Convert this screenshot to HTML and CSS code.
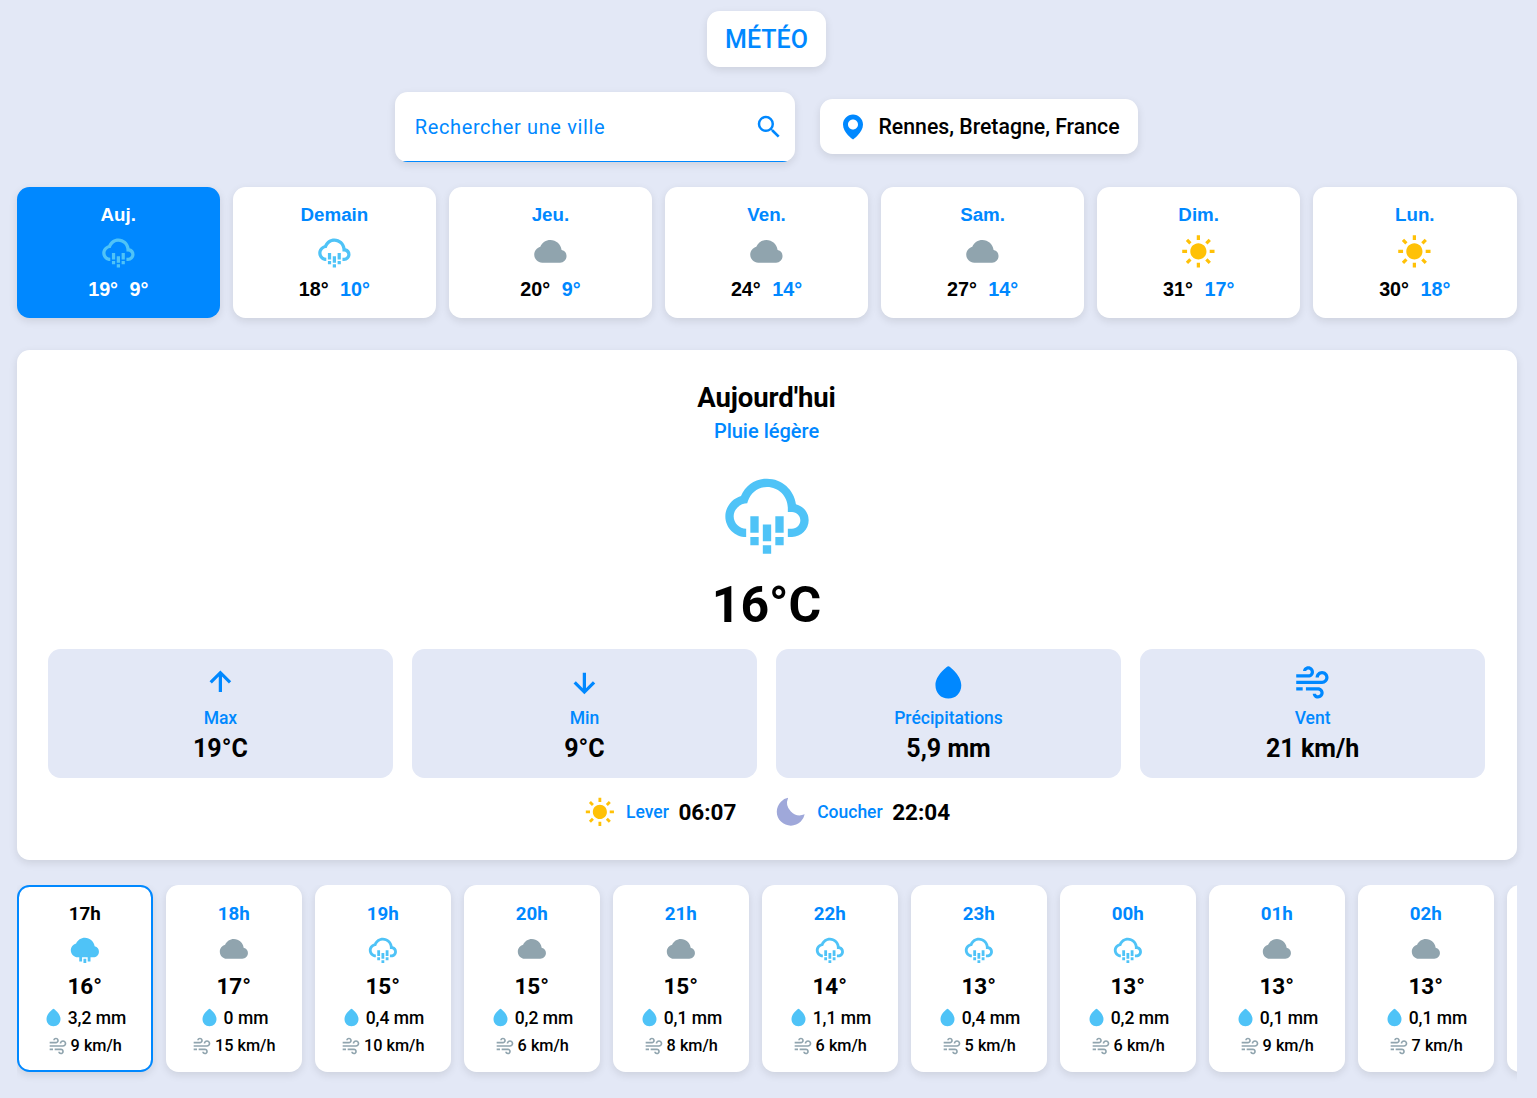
FILE: index.html
```html
<!DOCTYPE html>
<html lang="fr">
<head>
    <meta charset="UTF-8">
    <meta name="viewport" content="width=device-width, initial-scale=1.0">
    <title>Météo</title>
    <link rel="stylesheet" href="styles.css">
</head>
<body>
    <!-- Icônes -->
    <svg class="sprite" xmlns="http://www.w3.org/2000/svg">
        <symbol id="rain" viewBox="0 -1 24 24">
            <path d="M18.944 9.112C18.507 5.67 15.56 3 12 3 9.244 3 6.85 4.611 5.757 7.15 3.609 7.792 2 9.82 2 12c0 2.757 2.243 5 5 5v-2c-1.654 0-3-1.346-3-3 0-1.403 1.199-2.756 2.673-3.015l.581-.103.192-.559C8.149 6.273 9.895 5 12 5c2.757 0 5 2.243 5 5v1h1c1.103 0 2 .897 2 2s-.897 2-2 2h-1v2h1c2.206 0 4-1.794 4-4a4.008 4.008 0 0 0-3.056-3.888z"/>
            <path d="M8 12h2v4H8zm0 5h2v2H8zm3-3h2v4h-2zm0 5h2v2h-2zm3-7h2v4h-2zm0 5h2v2h-2z"/>
        </symbol>
        <symbol id="rain-solid" viewBox="0 -1 24 24">
            <path d="M18.944 9.112C18.507 5.67 15.56 3 12 3 9.244 3 6.85 4.611 5.757 7.15 3.609 7.792 2 9.82 2 12c0 2.757 2.243 5 5 5h1v3h2v-3h1v4h2v-4h1v3h2v-3h2c2.206 0 4-1.794 4-4a4.01 4.01 0 0 0-3.056-3.888zM11 17h2v1h-2z" fill-rule="evenodd"/>
        </symbol>
        <symbol id="cloud" viewBox="0 0 24 24">
            <path d="M18.944 11.112C18.507 7.67 15.56 5 12 5 9.244 5 6.85 6.611 5.757 9.15 3.609 9.792 2 11.82 2 14c0 2.757 2.243 5 5 5h11c2.206 0 4-1.794 4-4a4.01 4.01 0 0 0-3.056-3.888z"/>
        </symbol>
        <symbol id="sun" viewBox="0 0 24 24">
            <path d="M6.995 12c0 2.761 2.246 5.007 5.007 5.007s5.007-2.246 5.007-5.007-2.246-5.007-5.007-5.007S6.995 9.239 6.995 12zM11 19h2v3h-2zm0-17h2v3h-2zm-9 9h3v2H2zm17 0h3v2h-3zM5.637 19.778l-1.414-1.414 2.121-2.121 1.414 1.414zM16.242 6.344l2.122-2.122 1.414 1.414-2.122 2.122zM6.344 7.759 4.223 5.637l1.415-1.414 2.12 2.122zm13.434 10.605-1.414 1.414-2.122-2.122 1.414-1.414z"/>
        </symbol>
        <symbol id="moon" viewBox="0 0 24 24">
            <path d="M12 11.807A9.002 9.002 0 0 1 10.049 2a9.942 9.942 0 0 0-5.12 2.735c-3.905 3.905-3.905 10.237 0 14.142 3.906 3.906 10.237 3.905 14.143 0a9.946 9.946 0 0 0 2.735-5.119A9.003 9.003 0 0 1 12 11.807z"/>
        </symbol>
        <symbol id="drop" viewBox="0 0 24 24">
            <path d="M12 22c4.636 0 8-3.468 8-8.246C20 7.522 12.882 2.4 12.579 2.185a1 1 0 0 0-1.156-.001C11.12 2.397 4 7.503 4 13.75 4 18.53 7.364 22 12 22z"/>
        </symbol>
        <symbol id="wind" viewBox="0 0 24 24">
            <path d="M13 5.5C13 3.57 11.43 2 9.5 2 7.466 2 6.25 3.525 6.25 5h2c0-.415.388-1 1.25-1 .827 0 1.5.673 1.5 1.5S10.327 7 9.5 7H2v2h7.5C11.43 9 13 7.43 13 5.5zm2.5 9.5H8v2h7.5c.827 0 1.5.673 1.5 1.5s-.673 1.5-1.5 1.5c-.862 0-1.25-.585-1.25-1h-2c0 1.475 1.216 3 3.25 3 1.93 0 3.5-1.57 3.5-3.5S17.43 15 15.5 15z"/>
            <path d="M18 5c-2.206 0-4 1.794-4 4h2c0-1.103.897-2 2-2s2 .897 2 2-.897 2-2 2H2v2h16c2.206 0 4-1.794 4-4s-1.794-4-4-4zM2 15h4v2H2z"/>
        </symbol>
        <symbol id="up" viewBox="0 0 24 24">
            <path d="M11 8.414V18h2V8.414l4.293 4.293 1.414-1.414L12 4.586l-6.707 6.707 1.414 1.414z"/>
        </symbol>
        <symbol id="down" viewBox="0 0 24 24">
            <path d="m18.707 12.707-1.414-1.414L13 15.586V6h-2v9.586l-4.293-4.293-1.414 1.414L12 19.414z"/>
        </symbol>
        <symbol id="pin" viewBox="0 0 24 24">
            <path d="M12 2C7.589 2 4 5.589 4 9.995 3.971 16.44 11.696 21.784 12 22c0 0 8.029-5.56 8-12 0-4.411-3.589-8-8-8zm0 12c-2.21 0-4-1.79-4-4s1.79-4 4-4 4 1.79 4 4-1.79 4-4 4z"/>
        </symbol>
        <symbol id="search" viewBox="0 0 24 24">
            <path d="M15.5 14h-.79l-.28-.27A6.471 6.471 0 0 0 16 9.5 6.5 6.5 0 1 0 9.5 16c1.61 0 3.09-.59 4.23-1.57l.27.28v.79l5 4.99L20.49 19l-4.99-5zm-6 0C7.01 14 5 11.99 5 9.5S7.01 5 9.5 5 14 7.01 14 9.5 11.99 14 9.5 14z"/>
        </symbol>
    </svg>

    <div class="page">
        <h1 class="title">MÉTÉO</h1>

        <!-- Recherche et ville -->
        <div class="top-bar">
            <div class="search">
                <input type="text" placeholder="Rechercher une ville">
                <svg class="icon"><use href="#search"/></svg>
            </div>
            <div class="location">
                <svg class="icon"><use href="#pin"/></svg>
                <span>Rennes, Bretagne, France</span>
            </div>
        </div>

        <!-- Prévisions par jour -->
        <div class="days" id="days"></div>

        <!-- Détail du jour -->
        <div class="today">
            <h2>Aujourd'hui</h2>
            <p class="condition">Pluie légère</p>
            <svg class="icon today-icon rain"><use href="#rain"/></svg>
            <p class="current">16°C</p>

            <div class="stats">
                <div class="stat">
                    <svg class="icon"><use href="#up"/></svg>
                    <span class="label">Max</span>
                    <span class="value">19°C</span>
                </div>
                <div class="stat">
                    <svg class="icon"><use href="#down"/></svg>
                    <span class="label">Min</span>
                    <span class="value">9°C</span>
                </div>
                <div class="stat">
                    <svg class="icon"><use href="#drop"/></svg>
                    <span class="label">Précipitations</span>
                    <span class="value">5,9 mm</span>
                </div>
                <div class="stat">
                    <svg class="icon"><use href="#wind"/></svg>
                    <span class="label">Vent</span>
                    <span class="value">21 km/h</span>
                </div>
            </div>

            <div class="sun-times">
                <div class="sun-time">
                    <svg class="icon sun"><use href="#sun"/></svg>
                    <span class="label">Lever</span>
                    <span class="time">06:07</span>
                </div>
                <div class="sun-time">
                    <svg class="icon moon"><use href="#moon"/></svg>
                    <span class="label">Coucher</span>
                    <span class="time">22:04</span>
                </div>
            </div>
        </div>

        <!-- Prévisions par heure -->
        <div class="hours" id="hours"></div>
    </div>

    <script>
        const days = [
            { name: 'Auj.', icon: 'rain', max: 19, min: 9 },
            { name: 'Demain', icon: 'rain', max: 18, min: 10 },
            { name: 'Jeu.', icon: 'cloud', max: 20, min: 9 },
            { name: 'Ven.', icon: 'cloud', max: 24, min: 14 },
            { name: 'Sam.', icon: 'cloud', max: 27, min: 14 },
            { name: 'Dim.', icon: 'sun', max: 31, min: 17 },
            { name: 'Lun.', icon: 'sun', max: 30, min: 18 }
        ];

        const hours = [
            { hour: '17h', icon: 'rain-solid', temp: 16, rain: '3,2', wind: 9 },
            { hour: '18h', icon: 'cloud', temp: 17, rain: '0', wind: 15 },
            { hour: '19h', icon: 'rain', temp: 15, rain: '0,4', wind: 10 },
            { hour: '20h', icon: 'cloud', temp: 15, rain: '0,2', wind: 6 },
            { hour: '21h', icon: 'cloud', temp: 15, rain: '0,1', wind: 8 },
            { hour: '22h', icon: 'rain', temp: 14, rain: '1,1', wind: 6 },
            { hour: '23h', icon: 'rain', temp: 13, rain: '0,4', wind: 5 },
            { hour: '00h', icon: 'rain', temp: 13, rain: '0,2', wind: 6 },
            { hour: '01h', icon: 'cloud', temp: 13, rain: '0,1', wind: 9 },
            { hour: '02h', icon: 'cloud', temp: 13, rain: '0,1', wind: 7 }
        ];

        // Cartes des jours
        document.getElementById("days").innerHTML = days.map((day, index) => `
            <button class="day ${index === 0 ? 'active' : ''}">
                <span class="day-name">${day.name}</span>
                <svg class="icon ${day.icon}"><use href="#${day.icon}"/></svg>
                <span class="temps"><span>${day.max}°</span><span class="min">${day.min}°</span></span>
            </button>
        `).join("");

        // Cartes des heures, la dernière dépasse du cadre
        document.getElementById("hours").innerHTML = hours.map((h, index) => `
            <div class="hour ${index === 0 ? 'active' : ''}">
                <span class="hour-name">${h.hour}</span>
                <svg class="icon ${h.icon}"><use href="#${h.icon}"/></svg>
                <span class="hour-temp">${h.temp}°</span>
                <span class="hour-rain"><svg class="icon rain"><use href="#drop"/></svg>${h.rain} mm</span>
                <span class="hour-wind"><svg class="icon cloud"><use href="#wind"/></svg>${h.wind} km/h</span>
            </div>
        `).join("") + '<div class="hour"></div>';
    </script>
</body>
</html>
```
FILE: styles.css
```css
* {
    box-sizing: border-box;
}

body {
    margin: 0;
    background-color: #e3e8f6;
    font-family: Roboto, "Liberation Sans", sans-serif;
    color: #000;
    overflow: hidden;
}

h1, h2, p {
    margin: 0;
}

.sprite {
    display: none;
}

.icon {
    display: block;
    flex-shrink: 0;
    fill: currentColor;
}

.page {
    width: 1533px;
    padding: 11px 16.5px 0;
    display: flex;
    flex-direction: column;
    align-items: center;
}

.title {
    height: 56px;
    padding: 1px 18.5px 0;
    line-height: 56px;
    background-color: white;
    border-radius: 12.5px;
    box-shadow: 0 3px 8px rgba(0, 0, 0, 0.1);
    color: #0088ff;
    font-size: 25px;
    font-weight: 500;
}

/* Recherche */
.top-bar {
    display: flex;
    align-items: center;
    gap: 25px;
    margin-top: 25px;
}

.search {
    width: 400px;
    height: 70px;
    padding: 0 11px 0 20px;
    display: flex;
    align-items: center;
    background: linear-gradient(#0088ff, #0088ff) bottom / 100% 1px no-repeat white;
    border-radius: 12.5px;
    box-shadow: 0 3px 8px rgba(0, 0, 0, 0.1);
    color: #0088ff;
}

.search input {
    flex-grow: 1;
    padding: 0;
    border: none;
    outline: none;
    background: none;
    font-family: inherit;
    font-size: 20px;
    letter-spacing: 0.625px;
}

.search input::placeholder {
    color: #0088ff;
}

.search .icon {
    width: 30px;
    height: 30px;
}

.location {
    height: 55px;
    margin-bottom: 1px;
    padding: 0 18.75px;
    display: flex;
    align-items: center;
    gap: 10px;
    background-color: white;
    border-radius: 12.5px;
    box-shadow: 0 3px 8px rgba(0, 0, 0, 0.1);
    font-size: 21.25px;
    font-weight: 500;
}

.location .icon {
    width: 30px;
    height: 30px;
    color: #0088ff;
}

/* Jours */
.days {
    width: 100%;
    height: 148px;
    margin-top: 25px;
    display: flex;
    align-items: flex-start;
    gap: 12.5px;
}

.day {
    flex: 1;
    height: 131px;
    padding: 16px 0 0;
    display: flex;
    flex-direction: column;
    align-items: center;
    border: none;
    border-radius: 12.5px;
    background-color: white;
    box-shadow: 0 3px 8px rgba(0, 0, 0, 0.1);
    font-family: "Liberation Sans", Arial, sans-serif;
    font-size: 19.75px;
    font-weight: bold;
    line-height: 23px;
    color: #000;
    cursor: pointer;
}

.day-name {
    font-size: 18.75px;
    color: #0088ff;
}

.day .icon {
    width: 38.75px;
    height: 38.75px;
    margin: 6px 0 7px;
}

.temps {
    display: flex;
    gap: 11.5px;
}

.temps .min {
    color: #0088ff;
}

.day.active {
    background-color: #0088ff;
}

.day.active .day-name,
.day.active .temps,
.day.active .min {
    color: white;
}

.icon.rain,
.icon.rain-solid {
    color: #4fc3f7;
}

.icon.cloud {
    color: #90a4ae;
}

.icon.sun {
    color: #ffc107;
}

.icon.moon {
    color: #9fa8da;
}

/* Aujourd'hui */
.today {
    width: 100%;
    height: 510px;
    margin-top: 15px;
    padding: 31.25px;
    display: flex;
    flex-direction: column;
    align-items: center;
    background-color: white;
    border-radius: 12.5px;
    box-shadow: 0 3px 8px rgba(0, 0, 0, 0.1);
}

.today h2 {
    font-size: 27.5px;
    font-weight: 700;
    line-height: 33px;
    letter-spacing: -0.1px;
}

.condition {
    margin-top: 5px;
    font-size: 20px;
    font-weight: 500;
    line-height: 24px;
    color: #0088ff;
}

.today-icon {
    width: 100px;
    height: 100px;
    margin-top: 19px;
}

.current {
    margin-top: 12px;
    font-size: 50px;
    font-weight: 700;
    line-height: 62px;
}

.stats {
    width: 100%;
    margin-top: 13px;
    display: grid;
    grid-template-columns: repeat(4, 1fr);
    gap: 18.75px;
}

.stat {
    height: 129px;
    padding-top: 14px;
    display: flex;
    flex-direction: column;
    align-items: center;
    border-radius: 12.5px;
    background-color: #e3e8f6;
}

.stat .icon {
    width: 38.75px;
    height: 38.75px;
    color: #0088ff;
}

.label {
    font-size: 17.5px;
    font-weight: 500;
    line-height: 21px;
    color: #0088ff;
}

.stat .label {
    margin-top: 6px;
}

.value {
    margin-top: 4px;
    font-size: 25px;
    font-weight: 700;
    line-height: 31px;
}

.sun-times {
    margin-top: 17px;
    display: flex;
    gap: 37.5px;
}

.sun-time {
    display: flex;
    align-items: center;
    gap: 9.5px;
}

.sun-time .icon {
    width: 33.75px;
    height: 33.75px;
}

.time {
    font-size: 22.5px;
    font-weight: 700;
}

/* Heures */
.hours {
    width: 100%;
    height: 200px;
    margin-top: 25px;
    display: flex;
    align-items: flex-start;
    gap: 12.5px;
    overflow: hidden;
}

.hour {
    flex: 0 0 136.5px;
    height: 187px;
    padding-top: 18px;
    display: flex;
    flex-direction: column;
    align-items: center;
    border-radius: 12.5px;
    background-color: white;
    box-shadow: 0 3px 8px rgba(0, 0, 0, 0.1);
}

.hour.active {
    padding-top: 16px;
    border: 2px solid #0088ff;
}

.hour-name {
    font-size: 18.75px;
    font-weight: 700;
    line-height: 23px;
    color: #0088ff;
}

.hour.active .hour-name {
    color: #000;
}

.hour > .icon {
    width: 33.75px;
    height: 33.75px;
    margin: 6px 0;
}

.hour-temp {
    font-size: 22.5px;
    font-weight: 700;
    line-height: 28px;
}

.hour-rain,
.hour-wind {
    display: flex;
    align-items: center;
}

.hour-rain {
    margin-top: 7px;
    gap: 3.5px;
    font-size: 17.5px;
    font-weight: 500;
    line-height: 22px;
}

.hour-wind {
    margin-top: 7px;
    gap: 3px;
    font-size: 16.25px;
    font-weight: 500;
    line-height: 20px;
}

.hour-rain .icon {
    width: 21px;
    height: 21px;
}

.hour-wind .icon {
    width: 20px;
    height: 20px;
}
```
